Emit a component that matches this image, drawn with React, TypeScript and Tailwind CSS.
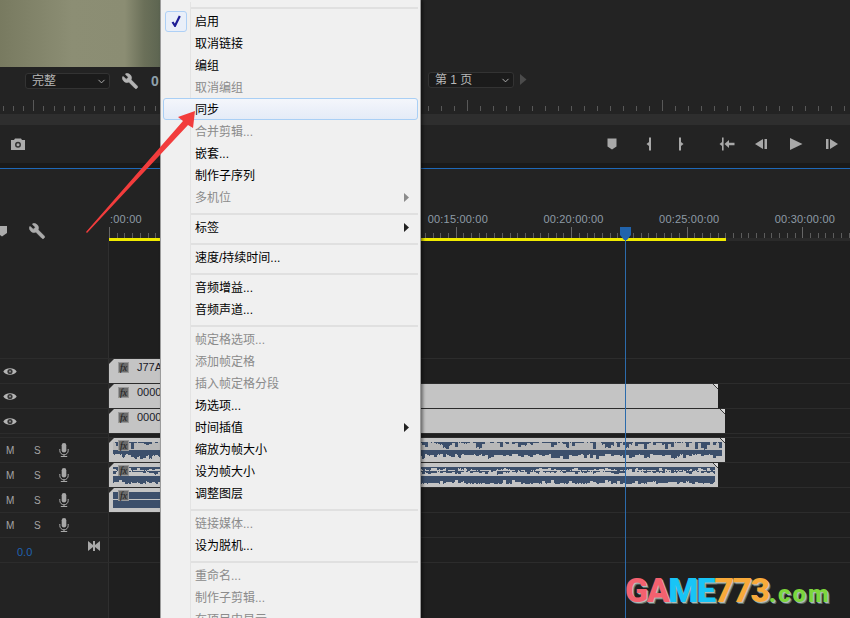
import { ChevronDown, Wrench } from 'lucide-react'

type MenuEntry =
  | { sep: true }
  | { label: string; off?: boolean; sub?: boolean; checked?: boolean; hover?: boolean }

const MENU: MenuEntry[] = [
  { sep: true },
  { label: '启用', checked: true },
  { label: '取消链接' },
  { label: '编组' },
  { label: '取消编组', off: true },
  { label: '同步', hover: true },
  { label: '合并剪辑...', off: true },
  { label: '嵌套...' },
  { label: '制作子序列' },
  { label: '多机位', off: true, sub: true },
  { sep: true },
  { label: '标签', sub: true },
  { sep: true },
  { label: '速度/持续时间...' },
  { sep: true },
  { label: '音频增益...' },
  { label: '音频声道...' },
  { sep: true },
  { label: '帧定格选项...', off: true },
  { label: '添加帧定格', off: true },
  { label: '插入帧定格分段', off: true },
  { label: '场选项...' },
  { label: '时间插值', sub: true },
  { label: '缩放为帧大小' },
  { label: '设为帧大小' },
  { label: '调整图层' },
  { sep: true },
  { label: '链接媒体...', off: true },
  { label: '设为脱机...' },
  { sep: true },
  { label: '重命名...', off: true },
  { label: '制作子剪辑...', off: true },
  { label: '在项目中显示', off: true },
]

const TIMECODES = ['00:15:00:00', '00:20:00:00', '00:25:00:00', '00:30:00:00']

// deterministic noise so the waveform is stable between renders
function noise(i: number, seed: number) {
  const v = Math.sin(i * 12.9898 + seed * 78.233) * 43758.5453
  return v - Math.floor(v)
}

function spikes(width: number, seed: number, y: number, max: number, dir: 1 | -1, power = 2) {
  let d = ''
  for (let x = 0; x < width; x++) {
    const block = Math.floor(x / 3)
    const len = Math.round(Math.pow(noise(block, seed), power) * max + noise(x, seed + 3) * 0.7)
    if (len > 0) d += `M${x} ${y}v${len * dir}h1v${-len * dir}z`
  }
  return d
}

function Ticks({ width, step, offset, major, majorAt, minorTop, height, color = '#585858' }: { width: number; step: number; offset: number; major: number; majorAt: number; minorTop: number; height: number; color?: string }) {
  const lines = []
  const count = Math.ceil((width - offset) / step)
  for (let i = 0; i < count; i++) {
    const big = (i - majorAt) % major === 0
    const x = Math.round(offset + i * step) + 0.5
    lines.push(<line key={i} x1={x} x2={x} y1={big ? 0 : minorTop} y2={height} stroke={color} />)
  }
  return (
    <svg width={width} height={height} className="block shrink-0">
      {lines}
    </svg>
  )
}

function TimelineTicks() {
  return (
    <div className="flex h-[11px] w-[741px] items-end justify-between">
      {Array.from({ length: 97 }, (_, i) => (
        <div key={i} className={i % 15 === 0 ? 'h-[11px] w-px bg-[#666666]' : 'h-[5px] w-px bg-[#5c5c5c]'} />
      ))}
    </div>
  )
}

function Eye() {
  return (
    <svg width="14" height="9" viewBox="0 0 14 9" className="ml-[3px]">
      <path d="M.3 4.500C3 .2 11 .2 13.700 4.500 11 8.800 3 8.800.3 4.500z" fill="#b4b4b4" />
      <circle cx="7" cy="4.500" r="2.600" fill="#333333" />
      <circle cx="7" cy="4.500" r="1" fill="#909090" />
    </svg>
  )
}

function Mic() {
  return (
    <svg width="10" height="14" viewBox="0 0 10 14">
      <rect x="2.700" y="0" width="4.600" height="9.500" rx="2.300" fill="#a8a8a8" />
      <path d="M.8 6v1.600a4.200 4.200 0 0 0 8.400 0V6M5 11.800v1.200M1.800 13.500h6.400" fill="none" stroke="#a8a8a8" />
    </svg>
  )
}

function AudioHead() {
  return (
    <div className="flex h-full items-center pl-[6px] text-[10px] text-[#a5a5a5]">
      <span className="w-[28px]">M</span>
      <span className="w-[25px]">S</span>
      <Mic />
    </div>
  )
}

function Row({ head, children }: { head?: React.ReactNode; children?: React.ReactNode }) {
  return (
    <div className="flex h-[25px] border-b border-[#2c2c2c]">
      <div className="w-[109px] shrink-0 border-r border-[#2f2f2f] bg-[#232323]">{head}</div>
      <div className="flex-1 bg-[#1f1f1f]">{children}</div>
    </div>
  )
}

function Fx() {
  return (
    <div className="flex h-[11px] w-[11px] shrink-0 items-center justify-center border border-[#989898] bg-[#6b6b6b] font-['Liberation_Serif',serif] text-[10px] italic leading-none text-[#1c1c1c]">
      fx
    </div>
  )
}

function Corners({ right }: { right?: boolean }) {
  return (
    <>
      <svg width="5" height="5" className="absolute left-0 top-0">
        <polygon points="0,0 5,0 0,5" fill="#2a2a2a" />
      </svg>
      {right && (
        <svg width="5" height="5" className="absolute right-0 top-0">
          <polygon points="0,0 5,0 5,5" fill="#d8d8d8" />
          <line x1="0" y1="0" x2="5" y2="5" stroke="#3a3a3a" />
        </svg>
      )}
    </>
  )
}

function VideoClip({ width, name, right }: { width: string; name: string; right?: boolean }) {
  return (
    <div className={`relative flex h-full items-start gap-[8px] bg-[#c4c4c4] pl-[9px] pt-[3px] ${width}`}>
      <Fx />
      <span className="text-[11px] leading-[11px] text-[#1a1a28]">{name}</span>
      <Corners right={right} />
    </div>
  )
}

function AudioClip({ width, px, seed, variant }: { width: string; px: number; seed: number; variant: 'a' | 'b' | 'flat' }) {
  const w = px - 7
  return (
    <div className={`relative h-full bg-[#c4c4c4] pl-[4px] pt-[4px] ${width}`}>
      <svg width={w} height="18" className="block">
        {variant === 'a' && (
          <>
            <rect width={w} height="8" fill="#b8b8b8" />
            <path d={spikes(w, seed, 0, 7, 1, 3)} fill="#3c4f6b" />
            <rect y="8" width={w} height="4" fill="#3c4f6b" />
            <path d={spikes(w, seed + 1, 12, 5, 1)} fill="#3c4f6b" />
          </>
        )}
        {variant === 'b' && (
          <>
            <rect y="0" width={w} height="4" fill="#3c4f6b" />
            <path d={spikes(w, seed, 4, 3, 1)} fill="#3c4f6b" />
            <path d={spikes(w, seed + 2, 4, 3, -1, 3)} fill="#c4c4c4" />
            <rect y="9" width={w} height="8" fill="#3c4f6b" />
            <path d={spikes(w, seed + 1, 17, 4, -1, 4)} fill="#c4c4c4" />
          </>
        )}
        {variant === 'flat' && (
          <>
            <rect width={w} height="7" fill="#3c4f6b" />
            <rect y="8" width={w} height="8" fill="#3c4f6b" />
          </>
        )}
      </svg>
      <div className="absolute left-[9px] top-[2px]">
        <Fx />
      </div>
      <Corners right={px > 200} />
    </div>
  )
}

function MenuRow({ item }: { item: Exclude<MenuEntry, { sep: true }> }) {
  const color = item.off ? 'text-[#8b8b8b]' : 'text-black'
  if (item.hover) {
    return (
      <div className={`mx-[2px] flex h-[22px] items-center rounded-[3px] border border-[#a9cff5] bg-[linear-gradient(180deg,#f4f6fb,#e4ebf7)] ${color}`}>
        <span className="pl-[31px] pt-px">{item.label}</span>
      </div>
    )
  }
  return (
    <div className={`flex h-[22px] items-center ${color}`}>
      <div className="flex h-full w-[30px] shrink-0 items-center justify-center border-r border-[#e3e3e3]">
        {item.checked && (
          <div className="flex h-[21px] w-[22px] items-center justify-center rounded-[3px] border border-[#aed0f6] bg-[#e9eff9]">
            <svg width="10" height="12" viewBox="0 0 10 12">
              <path d="M1.500 7l2.500 3.800L8.800 1" fill="none" stroke="#1d1d96" strokeWidth="2.200" />
            </svg>
          </div>
        )}
      </div>
      <span className="pl-[4px] pt-px">{item.label}</span>
      {item.sub && (
        <svg width="6" height="9" className="ml-auto mr-[10px]">
          <polygon points="0,0 5,4.500 0,9" fill={item.off ? '#8b8b8b' : '#222222'} />
        </svg>
      )}
    </div>
  )
}

function ContextMenu() {
  return (
    <div className="absolute left-[160px] top-0 w-[261px] border-x border-[#9c9c9c] bg-[#f0f0f0] pt-[2px] text-[12px] leading-none shadow-[2px_0_3px_rgba(0,0,0,0.45)]">
      {MENU.map((item, i) =>
        'sep' in item ? (
          <div key={i} className="flex h-[8px]">
            <div className="w-[30px] shrink-0 border-r border-[#e3e3e3]" />
            <div className="mr-[2px] mt-[5px] h-[2px] flex-1 bg-[#e0e0e0]" />
          </div>
        ) : (
          <MenuRow key={i} item={item} />
        ),
      )}
    </div>
  )
}

function TransportIcons() {
  return (
    <div className="ml-auto flex items-center pr-[10px] text-[#a8a8a8]">
      <svg width="16" height="16" viewBox="0 0 16 16" fill="currentColor">
        <path d="M3.500 2.500h9v8L8 13.500l-4.500-3z" />
      </svg>
      <svg width="16" height="16" viewBox="0 0 16 16" fill="currentColor" className="ml-[21px]">
        <path d="M8 1.500h2v13H8zM8 6v4L5.500 8z" />
      </svg>
      <svg width="16" height="16" viewBox="0 0 16 16" fill="currentColor" className="ml-[16px]">
        <path d="M6 1.500h2v13H6zM8 6v4l2.500-2z" />
      </svg>
      <svg width="16" height="16" viewBox="0 0 16 16" fill="currentColor" className="ml-[30px]">
        <path d="M3 1.500h1.600v13H3zM3 6v4L.5 8zM5.500 8l4.500-4v2.700h5.500v2.600H10V12z" />
      </svg>
      <svg width="16" height="16" viewBox="0 0 16 16" fill="currentColor" className="ml-[18px]">
        <path d="M2 8l8-5v10zM11.500 3H14v10h-2.500z" />
      </svg>
      <svg width="16" height="16" viewBox="0 0 16 16" fill="currentColor" className="ml-[19px]">
        <path d="M2 2l12.500 6L2 14z" />
      </svg>
      <svg width="16" height="16" viewBox="0 0 16 16" fill="currentColor" className="ml-[20px]">
        <path d="M2 3h2.500v10H2zM6 3l8 5-8 5z" />
      </svg>
    </div>
  )
}

export default function App() {
  return (
    <div className="relative h-[618px] w-[850px] overflow-hidden bg-[#232323] font-['Liberation_Sans','Noto_Sans_CJK_SC',sans-serif]">
      {/* Program monitor */}
      <div className="h-[67px] w-[160px] bg-[linear-gradient(90deg,#787a60_0%,#8c8e74_45%,#8b8d73_78%,#6b7059_90%,#5d6551_100%)]" />

      <div className="flex h-[33px] items-start pt-[5px] text-[12px] leading-none text-[#b8b8b8]">
        <div className="flex w-[428px] items-center pl-[25px]">
          <div className="flex h-[16px] w-[85px] items-center justify-between rounded-[3px] border border-[#333333] bg-[#1b1b1b] pl-[6px] pr-[2px]">
            <span>完整</span>
            <ChevronDown size={11} />
          </div>
          <Wrench size={18} fill="currentColor" strokeWidth={1} className="ml-[11px] -scale-x-100 text-[#b4b4b4]" />
          <span className="ml-[12px] text-[14px] font-bold text-[#8fa0ab]">0</span>
        </div>
        <div className="flex h-[16px] w-[86px] items-center justify-between rounded-[3px] border border-[#333333] bg-[#1b1b1b] pl-[6px] pr-[2px]">
          <span>第 1 页</span>
          <ChevronDown size={11} />
        </div>
        <svg width="7" height="11" className="ml-[6px] mt-[2px]">
          <polygon points="0,0 6.500,5.500 0,11" fill="#4b4b4b" />
        </svg>
      </div>

      <div className="flex h-[14px]">
        <Ticks width={160} step={10.1} offset={3} major={15} majorAt={3} minorTop={6} height={11} />
        <div className="w-[261px]" />
        <Ticks width={429} step={13} offset={7} major={15} majorAt={3} minorTop={6} height={11} />
      </div>

      <div className="h-[11px] bg-[#2e2e2e]" />

      <div className="flex h-[38px] items-center pl-[11px]">
        <svg width="14" height="12" viewBox="0 0 14 12">
          <path d="M4 .5h6l1 1.500h3v10H0V2h3z" fill="#ababab" />
          <circle cx="7" cy="6.700" r="3" fill="#333333" />
          <circle cx="7" cy="6.700" r="1.500" fill="#ababab" />
        </svg>
        <TransportIcons />
      </div>

      <div className="h-[5px] bg-[#1a1a1a]" />
      <div className="h-px bg-[#1e68b8]" />

      {/* Timeline */}
      <div className="flex h-[72px]">
        <div className="flex w-[109px] shrink-0 items-center pt-[52px] text-[#ababab]">
          <svg width="10" height="11" viewBox="0 0 10 11" className="-ml-[3px]">
            <path d="M0 0h10v7l-5 3.500L0 7z" fill="#ababab" />
          </svg>
          <Wrench size={18} fill="currentColor" strokeWidth={1} className="ml-[21px] -scale-x-100" />
        </div>
        <div className="min-w-0 flex-1 overflow-hidden">
          <div className="mt-[43px] flex h-[14px] text-[11px] leading-[14px] tracking-[0.2px] text-[#8e9ba6]">
            <div className="w-[291px] shrink-0 pl-px">:00:00</div>
            {TIMECODES.map((t) => (
              <div key={t} className="w-[115.700px] shrink-0 whitespace-nowrap text-center">
                {t}
              </div>
            ))}
          </div>
          <div className="mt-px">
            <TimelineTicks />
          </div>
          <div className="h-[3px] bg-[#2a2a2a]">
            <div className="h-full w-[617px] bg-[#f0ea00]" />
          </div>
        </div>
      </div>

      <div className="flex h-[118px] border-b border-[#2c2c2c]">
        <div className="w-[109px] shrink-0 border-r border-[#2f2f2f] bg-[#232323]" />
        <div className="flex-1 bg-[#1f1f1f]" />
      </div>

      <Row head={<div className="flex h-full items-center"><Eye /></div>}>
        <VideoClip width="w-[60px]" name="J77A" />
      </Row>
      <Row head={<div className="flex h-full items-center"><Eye /></div>}>
        <VideoClip width="w-[609px]" name="0000" right />
      </Row>
      <Row head={<div className="flex h-full items-center"><Eye /></div>}>
        <VideoClip width="w-[616px]" name="0000" right />
      </Row>

      <div className="flex h-[4px] border-b border-[#2c2c2c]">
        <div className="w-[109px] shrink-0 border-r border-[#2f2f2f] bg-[#232323]" />
        <div className="flex-1 bg-[#1f1f1f]" />
      </div>

      <Row head={<AudioHead />}>
        <AudioClip width="w-[616px]" px={616} seed={4} variant="a" />
      </Row>
      <Row head={<AudioHead />}>
        <AudioClip width="w-[609px]" px={609} seed={9} variant="b" />
      </Row>
      <Row head={<AudioHead />}>
        <AudioClip width="w-[60px]" px={60} seed={2} variant="flat" />
      </Row>
      <Row head={<AudioHead />} />
      <Row
        head={
          <div className="flex h-full justify-between pl-[17px] pr-[8px]">
            <span className="self-end pb-[4px] text-[11px] leading-none text-[#1f62b0]">0.0</span>
            <svg width="12" height="10" viewBox="0 0 12 10" className="mt-[3px]">
              <path d="M0 0l5 4V0h2v4l5-4v10L7 6v4H5V6l-5 4z" fill="#a8a8a8" />
            </svg>
          </div>
        }
      />
      <div className="flex h-[55px]">
        <div className="w-[109px] shrink-0 border-r border-[#2f2f2f] bg-[#232323]" />
        <div className="flex-1 bg-[#1f1f1f]" />
      </div>

      {/* Playhead */}
      <div className="absolute bottom-0 left-[625px] top-[238px] w-px bg-[#2c6bab]" />
      <svg width="11" height="13" className="absolute left-[620px] top-[227px]">
        <path d="M0 0h11v8l-4 5H4L0 8z" fill="#2163ab" />
      </svg>

      <ContextMenu />

      {/* Annotation arrow */}
      <svg width="125" height="130" className="absolute left-[80px] top-[105px]">
        <polygon points="6,127 7,128 108,20 113,23 115,6 98,12 103,16" fill="#f23c3c" />
      </svg>

      {/* Watermark */}
      <div className="absolute left-[625px] top-[570px] flex items-baseline font-['Roboto',sans-serif] font-black leading-[40px] [text-shadow:1px_1px_0_rgba(255,255,255,0.55),2px_2px_0_rgba(150,190,180,0.5)]">
        <span className="text-[34px] tracking-[-1.500px] text-[#f3616f]">GA</span>
        <span className="text-[34px] tracking-[-1.500px] text-[#18c4f6]">ME</span>
        <span className="text-[34px] tracking-[-1.500px] text-[#f8aa3a]">773</span>
        <span className="text-[24px] tracking-[2px] text-[#7dd63c]">.com</span>
      </div>
    </div>
  )
}
